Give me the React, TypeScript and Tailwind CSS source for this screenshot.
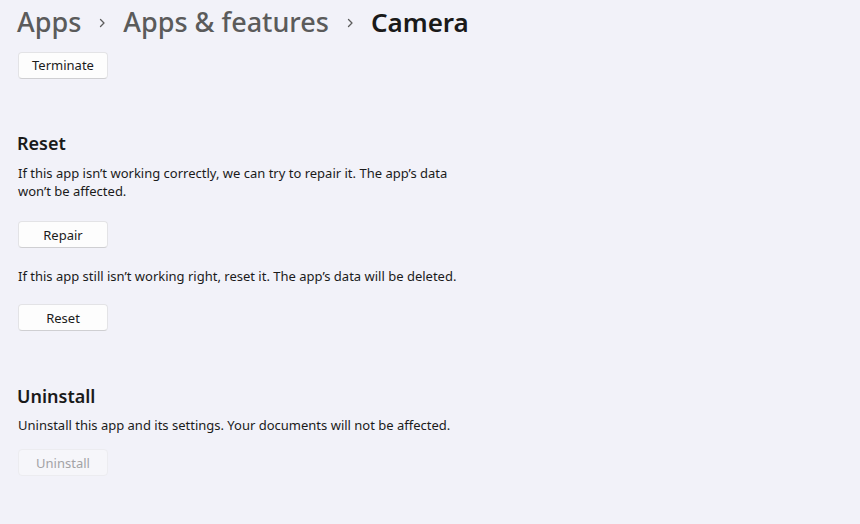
import type { ReactNode } from "react";

const font = { fontFamily: '"Segoe UI", "Noto Sans", sans-serif' };

const Chevron = () => (
  <svg width="10" height="10" viewBox="0 0 10 10" className="mx-[16px] mt-[3px] text-[#5c5c5c]">
    <path d="M3.5 1.5 L7 5 L3.5 8.5" fill="none" stroke="currentColor" strokeWidth="1.3" strokeLinecap="round" strokeLinejoin="round" />
  </svg>
);

const ActionButton = ({ children, disabled = false }: { children: ReactNode; disabled?: boolean }) => (
  <button
    disabled={disabled}
    className={`h-[27px] w-[90px] rounded-[4px] border text-[13px] ${
      disabled
        ? "border-[#ececf0] bg-[#f6f6fa] text-[#a3a3a6]"
        : "border-[#e3e3e6] border-b-[#cfcfd2] bg-[#fdfdfd] text-[#1b1b1b]"
    }`}
  >
    {children}
  </button>
);

const App = () => {
  return (
    <div className="h-[524px] w-[860px] overflow-hidden bg-[#f2f2f9] pl-[17px]" style={font}>
      {/* Breadcrumb */}
      <div className="flex h-[43px] items-center text-[27px] leading-none">
        <span className="font-medium text-[#5b5b5b]">Apps</span>
        <Chevron />
        <span className="font-medium text-[#5b5b5b]">Apps &amp; features</span>
        <Chevron />
        <span className="text-[26px] font-semibold text-[#1a1a1a]">Camera</span>
      </div>

      <div className="mt-[9px] pl-[1px]">
        <ActionButton>Terminate</ActionButton>
      </div>

      {/* Reset */}
      <h2 className="mt-[51px] text-[18px] font-semibold leading-[26px] text-[#1a1a1a]">Reset</h2>
      <div className="w-[460px] pl-[1px] text-[13px] leading-[18px] text-[#1b1b1b]">
        <p className="mt-[8px]">
          If this app isn’t working correctly, we can try to repair it. The app’s data won’t be affected.
        </p>
        <div className="mt-[21px]">
          <ActionButton>Repair</ActionButton>
        </div>
        <p className="mt-[19px]">If this app still isn’t working right, reset it. The app’s data will be deleted.</p>
        <div className="mt-[19px]">
          <ActionButton>Reset</ActionButton>
        </div>
      </div>

      {/* Uninstall */}
      <h2 className="mt-[52px] text-[18px] font-semibold leading-[26px] text-[#1a1a1a]">Uninstall</h2>
      <div className="pl-[1px] text-[13px] leading-[18px] text-[#1b1b1b]">
        <p className="mt-[7px]">Uninstall this app and its settings. Your documents will not be affected.</p>
        <div className="mt-[15px]">
          <ActionButton disabled>Uninstall</ActionButton>
        </div>
      </div>
    </div>
  );
};

export default App;
